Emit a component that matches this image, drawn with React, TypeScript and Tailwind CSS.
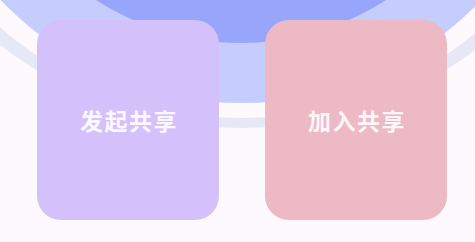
export default function App() {
  return (
    <div
      className="relative h-[242px] w-[475px] overflow-hidden bg-[#fdf9fc]"
      style={{ fontFamily: '"Noto Sans CJK SC", "Noto Sans", sans-serif' }}
    >
      {/* backdrop rings */}
      <div className="absolute left-[-150px] top-[-654px] size-[782px] rounded-full bg-[#e7e8f6]" />
      <div className="absolute left-[-124px] top-[-612px] size-[730px] rounded-full bg-[#fdf9fc]" />
      <div className="absolute left-[-91px] top-[-561px] size-[664px] rounded-full bg-[#c5cdfc]" />
      <div className="absolute left-[-25px] top-[-489px] size-[532px] rounded-full bg-[#97a6fb]" />

      <div className="relative flex gap-[46px] pl-[37px] pt-[20px]">
        <button className="flex h-[200px] w-[182px] items-center justify-center rounded-[24px] bg-[#d4c1fb] pl-[2px] text-[23px] font-bold tracking-[1.5px] text-[#fbf8ff]">
          发起共享
        </button>
        <button className="flex h-[200px] w-[182px] items-center justify-center rounded-[24px] bg-[#ecb9c4] pl-[2px] text-[23px] font-bold tracking-[1.5px] text-[#fdf6f8]">
          加入共享
        </button>
      </div>
    </div>
  )
}
